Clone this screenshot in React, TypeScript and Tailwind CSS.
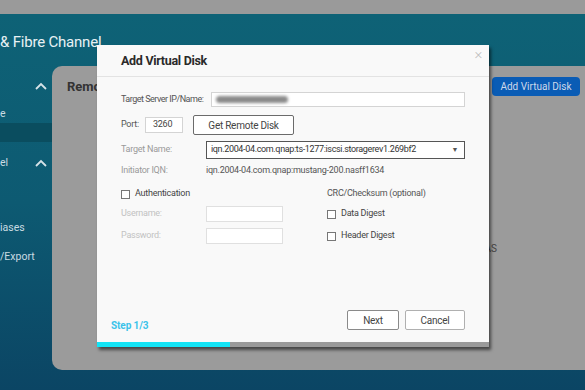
import React from "react";

const Checkbox = () => (
  <span className="inline-block w-[9px] h-[9px] border border-[#777] bg-white shrink-0" />
);

const Chevron = () => (
  <svg width="12" height="8" viewBox="0 0 12 8" className="shrink-0">
    <path d="M1 7 L6 2 L11 7" stroke="#d6e3e8" strokeWidth="1.8" fill="none" />
  </svg>
);

const Modal = () => (
  <div className="absolute left-[97px] top-[45px] w-[392px] h-[302px] bg-[#f9f9f9] flex flex-col shadow-[2px_3px_3px_rgba(0,0,0,0.55)] text-[9px] tracking-[-0.25px]">
    <div className="h-[32px] flex items-center justify-between pl-[24px] pr-[7px] border-b border-[#e3e3e3] relative">
      <h2 className="text-[12.5px] font-bold text-[#2a2a2a] tracking-[-0.3px] mt-[2px]">Add Virtual Disk</h2>
      <span className="text-[15px] text-[#bdbdbd] font-light -mt-[12px]">×</span>
    </div>

    <div className="flex flex-col pl-[24px] pr-[24px] pt-[15px]">
      <div className="flex items-center h-[15px]">
        <span className="w-[90px] text-[#555] tracking-[-0.5px]">Target Server IP/Name:</span>
        <div className="flex-1 h-[15px] border border-[#d4d4d4] bg-white flex items-center pl-[4px]">
          <div className="w-[72px] h-[7px] rounded-full bg-[#8a8a8a] blur-[1.5px]" />
        </div>
      </div>

      <div className="flex items-center h-[20px] mt-[8px]">
        <span className="w-[24px] text-[#555]">Port:</span>
        <div className="w-[38px] h-[16px] border border-[#d4d4d4] bg-white flex items-center pl-[7px] text-[#444]">3260</div>
        <button className="ml-[10px] w-[101px] h-[20px] border border-[#6b6b6b] rounded-[2px] bg-white text-[10px] text-[#444]">
          Get Remote Disk
        </button>
      </div>

      <div className="flex items-center h-[18px] mt-[6px]">
        <span className="w-[85px] text-[#9a9a9a]">Target Name:</span>
        <div className="flex-1 h-[18px] border border-[#555] bg-white flex items-center justify-between pl-[4px] pr-[6px] text-[#333] tracking-[-0.35px]">
          <span>iqn.2004-04.com.qnap:ts-1277:iscsi.storagerev1.269bf2</span>
          <span className="text-[7px] text-[#555]">▼</span>
        </div>
      </div>

      <div className="flex items-center h-[14px] mt-[5px]">
        <span className="w-[85px] text-[#9a9a9a]">Initiator IQN:</span>
        <span className="text-[#555]">iqn.2004-04.com.qnap:mustang-200.nasff1634</span>
      </div>

      <div className="flex mt-[9px]">
        <div className="flex flex-col w-[206px]">
          <div className="flex items-center h-[14px] gap-[5px]">
            <Checkbox />
            <span className="text-[#444]">Authentication</span>
          </div>
          <div className="flex items-center h-[16px] mt-[5px]">
            <span className="w-[85px] text-[#c2c2c2]">Username:</span>
            <div className="w-[77px] h-[16px] border border-[#e0e0e0] bg-white" />
          </div>
          <div className="flex items-center h-[16px] mt-[6px]">
            <span className="w-[85px] text-[#c2c2c2]">Password:</span>
            <div className="w-[77px] h-[16px] border border-[#e0e0e0] bg-white" />
          </div>
        </div>
        <div className="flex flex-col">
          <div className="flex items-center h-[14px] text-[#555]">CRC/Checksum (optional)</div>
          <div className="flex items-center h-[16px] mt-[5px] gap-[5px]">
            <Checkbox />
            <span className="text-[#444]">Data Digest</span>
          </div>
          <div className="flex items-center h-[16px] mt-[6px] gap-[5px]">
            <Checkbox />
            <span className="text-[#444]">Header Digest</span>
          </div>
        </div>
      </div>
    </div>

    <div className="flex-1" />

    <div className="flex items-end justify-between pl-[14px] pr-[24px] pb-[9px]">
      <span className="text-[10px] font-bold text-[#3cc3ea] tracking-[-0.1px]">Step 1/3</span>
      <div className="flex gap-[6px] mb-[3px]">
        <button className="w-[52px] h-[20px] border border-[#8a8a8a] rounded-[2px] bg-white text-[10px] text-[#444]">Next</button>
        <button className="w-[60px] h-[20px] border border-[#b0b0b0] rounded-[2px] bg-white text-[10px] text-[#444]">Cancel</button>
      </div>
    </div>

    <div className="flex h-[5px]">
      <div className="w-[133px] bg-[#12e4f5]" />
      <div className="flex-1 bg-[#9a9a9a]" />
    </div>
  </div>
);

export default function App() {
  return (
    <div
      className="relative w-[585px] h-[390px] overflow-hidden flex flex-col bg-[#0c4663]"
      style={{ fontFamily: "Roboto, 'Liberation Sans', sans-serif" }}
    >
      <div className="h-[14px] bg-[#9a9a9a] shrink-0" />
      <div className="flex-1 flex flex-col bg-gradient-to-b from-[#0e6276] via-[#0d5a72] to-[#0b4564]">
        <div className="h-[52px] flex items-center shrink-0">
          <span className="text-[15px] text-[#e8f1f4] tracking-[-0.2px] mt-[5px]">&amp; Fibre Channel</span>
        </div>
        <div className="flex h-[304px]">
          <nav className="w-[52px] shrink-0 flex flex-col text-[10.5px] text-[#c9dbe2]">
            <div className="h-[18px] flex items-center justify-end pr-[5px] mt-[11px]">
              <Chevron />
            </div>
            <div className="h-[14px] flex items-center mt-[12px]">e</div>
            <div className="h-[19px] bg-[#0a4d5f] mt-[2px]" />
            <div className="h-[18px] flex items-center justify-between pr-[5px] mt-[12px]">
              <span>el</span>
              <Chevron />
            </div>
            <div className="h-[14px] flex items-center mt-[49px]">iases</div>
            <div className="h-[14px] flex items-center mt-[15px]">/Export</div>
          </nav>
          <main className="flex-1 bg-[#9b9b9b] rounded-l-[10px] flex flex-col">
            <div className="flex items-center justify-between pl-[15px] pr-[5px] pt-[11px]">
              <span className="text-[13px] font-bold text-[#333]">Remote Disk</span>
              <button className="w-[88px] h-[19px] rounded-[4px] bg-[#0a5cb5] text-[10px] text-[#cfd9ea]">Add Virtual Disk</button>
            </div>
            <div className="flex justify-end pr-[88px] mt-[144px]">
              <span className="text-[10px] text-[#444]">NAS</span>
            </div>
          </main>
        </div>
      </div>
      <Modal />
    </div>
  );
}
